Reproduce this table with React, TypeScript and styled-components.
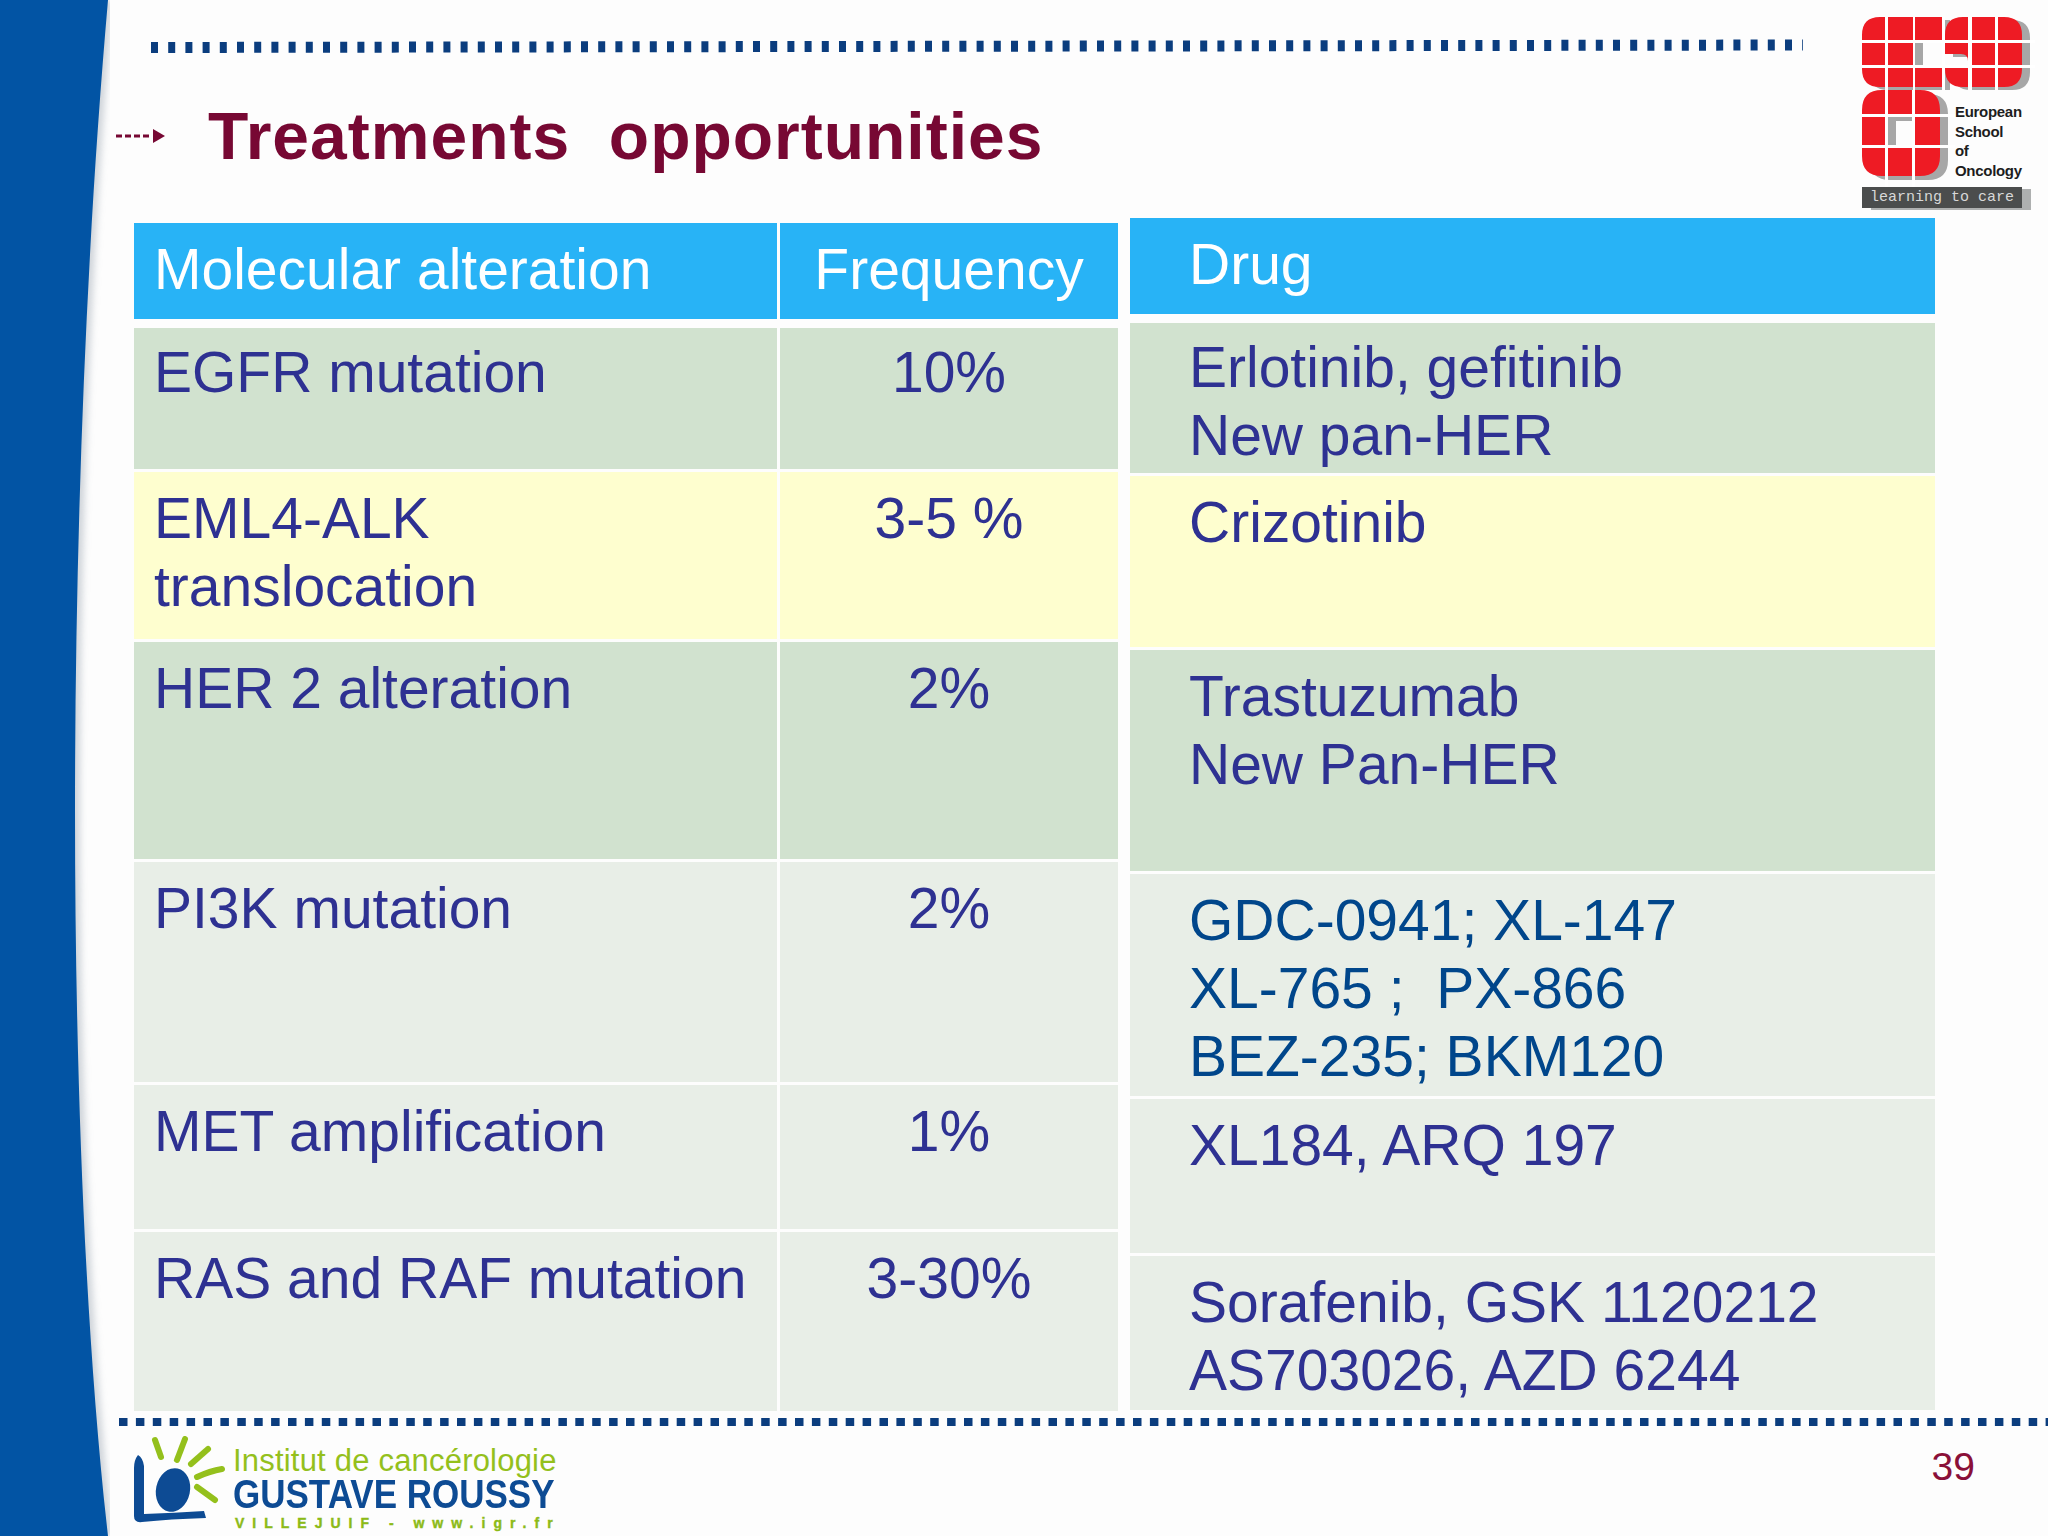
import React from 'react';
import styled, { createGlobalStyle } from 'styled-components';

// --- Palette ---
const BLUE_BAND = '#0254a4';
const NAVY_DOTS = '#0b3d7e';
const MAROON = '#770833';
const HEAD_BLUE = '#28b3f6';
const INK = '#2e3192';
const INK_ALT = '#00468b';
const ROW_GREEN = '#d1e2cf';
const ROW_YELLOW = '#fefecf';
const ROW_PALE = '#e8eee7';
const ESO_RED = '#ee1b24';
const ESO_SHADE = '#a7a7a7';
const GR_BLUE = '#0d4b94';
const GR_GREEN = '#94c01c';

const GlobalStyle = createGlobalStyle`
  html, body {
    margin: 0;
    padding: 0;
    background: #fdfdfd;
  }
  body {
    font-family: 'Liberation Sans', Arial, sans-serif;
  }
`;

// --- Slide frame ---
const Slide = styled.div`
  width: 2048px;
  height: 1536px;
  display: grid;
  grid-template-columns: 110px 1fr;
  background: #fdfdfd;
  overflow: hidden;
`;

const BandSvg = styled.svg`
  display: block;
  width: 110px;
  height: 1536px;
`;

const Main = styled.div`
  display: flex;
  flex-direction: column;
  min-width: 0;
`;

// --- Header ---
const Header = styled.header`
  height: 218px;
  display: flex;
  align-items: flex-start;
`;

const HeaderLeft = styled.div`
  flex: 1;
  padding-top: 39px;
`;

const TopRule = styled.svg`
  display: block;
  margin-left: 41px;
  width: 1652px;
  height: 16px;
`;

const TitleRow = styled.div`
  display: flex;
  align-items: center;
  height: 66px;
  margin-top: 48px;
  padding-left: 6px;
`;

const TitleArrow = styled.svg`
  width: 50px;
  height: 20px;
  margin-right: 42px;
  flex-shrink: 0;
`;

const Title = styled.h1`
  margin: 0;
  font-family: 'Liberation Sans', Arial, sans-serif;
  font-weight: 700;
  font-size: 66px;
  line-height: 66px;
  letter-spacing: 1px;
  color: ${MAROON};
  white-space: pre;
`;

// --- ESO logo ---
const EsoLogo = styled.div`
  width: 173px;
  margin: 17px 13px 0 0;
  display: grid;
  grid-template-columns: 93px 1fr;
  grid-template-rows: 73px 97px auto;
`;

const EsoTiles = styled.svg`
  display: block;
  grid-column: 1 / 3;
  width: 173px;
  height: 73px;
`;

const EsoO = styled.svg`
  display: block;
  width: 93px;
  height: 97px;
`;

const EsoName = styled.div`
  padding-top: 12px;
  font-family: 'Liberation Sans', Arial, sans-serif;
  font-weight: 700;
  font-size: 15px;
  line-height: 19.5px;
  color: #1d1d1d;
  letter-spacing: -0.3px;
`;

const EsoBar = styled.div`
  grid-column: 1 / 3;
  width: 160px;
  height: 21px;
  background: #4b4d4d;
  box-shadow: 9px 2px 0 #aeb0b0;
  color: #d8d8d8;
  font-family: 'Liberation Mono', monospace;
  font-size: 15px;
  line-height: 21px;
  text-align: center;
`;

// --- Tables ---
const Tables = styled.section`
  display: flex;
  align-items: flex-start;
  gap: 12px;
  padding-left: 24px;
`;

const Table = styled.div<{ $width: number; $offset: number }>`
  width: ${({ $width }) => $width}px;
  margin-top: ${({ $offset }) => $offset}px;
  display: flex;
  flex-direction: column;
  gap: 3px;
`;

const Row = styled.div<{ $cols: string; $height: number; $head?: boolean }>`
  display: grid;
  grid-template-columns: ${({ $cols }) => $cols};
  column-gap: 3px;
  height: ${({ $height }) => $height}px;
  margin-bottom: ${({ $head }) => ($head ? 6 : 0)}px;
`;

const Cell = styled.div<{ $bg: string; $color: string; $pad: number; $top?: number; $center?: boolean }>`
  background: ${({ $bg }) => $bg};
  color: ${({ $color }) => $color};
  padding: ${({ $top }) => $top ?? 12}px 0 0 ${({ $pad }) => $pad}px;
  text-align: ${({ $center }) => ($center ? 'center' : 'left')};
  font-family: 'Liberation Sans', Arial, sans-serif;
  font-size: 57px;
  line-height: 68px;
  white-space: pre;
  box-sizing: border-box;
`;

// --- Footer ---
const BottomRule = styled.svg`
  display: block;
  margin: 7px 0 0 9px;
  width: 1929px;
  height: 8px;
`;

const Footer = styled.footer`
  flex: 1;
  display: flex;
  justify-content: space-between;
  align-items: flex-start;
  padding-left: 20px;
`;

const GrLogo = styled.div`
  display: flex;
  align-items: flex-start;
`;

const GrIcon = styled.svg`
  width: 96px;
  height: 92px;
  margin: 10px 9px 0 0;
`;

const GrText = styled.div`
  display: flex;
  flex-direction: column;
  padding-top: 21px;
`;

const GrInstitut = styled.span`
  font-family: 'Liberation Sans', Arial, sans-serif;
  font-size: 31px;
  line-height: 28px;
  color: ${GR_GREEN};
  letter-spacing: 0.2px;
  margin-left: -2px;
`;

const GrName = styled.span`
  margin-top: 3px;
  margin-left: -2px;
  font-family: 'Liberation Sans', Arial, sans-serif;
  font-weight: 700;
  font-size: 40px;
  line-height: 33px;
  color: ${GR_BLUE};
  transform: scaleX(0.875);
  transform-origin: left center;
  white-space: nowrap;
`;

const GrPlace = styled.span`
  margin-top: 5px;
  font-family: 'Liberation Sans', Arial, sans-serif;
  font-weight: 700;
  font-size: 14px;
  line-height: 14px;
  letter-spacing: 8px;
  color: #8cba17;
  white-space: nowrap;
  -webkit-text-stroke: 0.4px #8cba17;
`;

const PageNumber = styled.span`
  margin: 21px 73px 0 0;
  font-family: 'Liberation Sans', Arial, sans-serif;
  font-size: 39px;
  line-height: 39px;
  color: #8a1038;
`;

// --- Data ---
type AltRow = { alteration: string; frequency: string; bg: string; height: number; top?: number };
type DrugRow = { drugs: string; bg: string; height: number; color?: string; top?: number };

const alterations: AltRow[] = [
  { alteration: 'EGFR mutation', frequency: '10%', bg: ROW_GREEN, height: 141, top: 10 },
  { alteration: 'EML4-ALK\ntranslocation', frequency: '3-5 %', bg: ROW_YELLOW, height: 167 },
  { alteration: 'HER 2 alteration', frequency: '2%', bg: ROW_GREEN, height: 217 },
  { alteration: 'PI3K mutation', frequency: '2%', bg: ROW_PALE, height: 220 },
  { alteration: 'MET amplification', frequency: '1%', bg: ROW_PALE, height: 144 },
  { alteration: 'RAS and RAF mutation', frequency: '3-30%', bg: ROW_PALE, height: 179 },
];

const drugs: DrugRow[] = [
  { drugs: 'Erlotinib, gefitinib\nNew pan-HER', bg: ROW_GREEN, height: 150, top: 10 },
  { drugs: 'Crizotinib', bg: ROW_YELLOW, height: 171 },
  { drugs: 'Trastuzumab\nNew Pan-HER', bg: ROW_GREEN, height: 221 },
  { drugs: 'GDC-0941; XL-147\nXL-765 ;  PX-866\nBEZ-235; BKM120', bg: ROW_PALE, height: 222, color: INK_ALT },
  { drugs: 'XL184, ARQ 197', bg: ROW_PALE, height: 154 },
  { drugs: 'Sorafenib, GSK 1120212\nAS703026, AZD 6244', bg: ROW_PALE, height: 154 },
];

const LEFT_COLS = '643px 338px';

// --- Drawings ---
const BAND_PATH = 'M0 0 H108 C64 500 64 1150 108 1536 H0 Z';

function Band() {
  return (
    <BandSvg viewBox="0 0 110 1536">
      <defs>
        <filter id="bandShade" x="-50%" y="-5%" width="200%" height="110%">
          <feGaussianBlur stdDeviation="3.5" />
        </filter>
      </defs>
      <path d={BAND_PATH} fill="#aab3bd" opacity="0.55" filter="url(#bandShade)" transform="translate(5 0)" />
      <path d={BAND_PATH} fill={BLUE_BAND} />
    </BandSvg>
  );
}

// E: notch on the middle right; S: notches top-right and bottom-left
const E_PATH = 'M18 0 H80 V23 H53 V48 H80 V70 H18 Q0 70 0 52 V18 Q0 0 18 0 Z';
const S_PATH =
  'M101 0 H142 Q160 0 160 18 V34 H143 Q136 34 136 27 V23 H83 V18 Q83 0 101 0 Z ' +
  'M83 26 H160 V52 Q160 70 142 70 H101 Q83 70 83 52 V48 H106 V44 Q106 37 99 37 H83 Z';

function EsoTop() {
  return (
    <EsoTiles viewBox="0 0 173 73">
      <g fill={ESO_SHADE} transform="translate(8 3)">
        <path d={E_PATH} />
        <path d={S_PATH} />
      </g>
      <g fill={ESO_RED}>
        <path d={E_PATH} />
        <path d={S_PATH} />
      </g>
      <g fill="#fff">
        <rect x="23" y="0" width="3" height="73" />
        <rect x="51" y="0" width="2" height="73" />
        <rect x="80" y="0" width="3" height="73" />
        <rect x="106" y="0" width="4" height="73" />
        <rect x="133" y="0" width="3" height="73" />
        <rect x="0" y="23" width="173" height="3" />
        <rect x="0" y="48" width="173" height="3" />
      </g>
    </EsoTiles>
  );
}

const O_PATH = 'M20 0 H58 Q78 0 78 20 V66 Q78 86 58 86 H20 Q0 86 0 66 V20 Q0 0 20 0 Z M26 27 H50 V58 H26 Z';

function EsoOTile() {
  return (
    <EsoO viewBox="0 0 93 97">
      <path d={O_PATH} fill={ESO_SHADE} fillRule="evenodd" transform="translate(8 4)" />
      <path d={O_PATH} fill={ESO_RED} fillRule="evenodd" />
      <g fill="#fff">
        <rect x="23" y="0" width="3" height="97" />
        <rect x="50" y="0" width="3" height="97" />
        <rect x="0" y="24" width="93" height="3" />
        <rect x="0" y="55" width="93" height="3" />
      </g>
    </EsoO>
  );
}

function GustaveIcon() {
  return (
    <GrIcon viewBox="0 0 96 92">
      <g stroke={GR_GREEN} strokeWidth="6" strokeLinecap="round" fill="none">
        <path d="M25 4 L31 21" />
        <path d="M55 3 L47 24" />
        <path d="M78 13 L61 28" />
        <path d="M67 41 Q80 35 92 33" />
        <path d="M67 51 L85 64" />
      </g>
      <ellipse cx="43" cy="54" rx="17" ry="22" fill={GR_BLUE} transform="rotate(12 43 54)" />
      <path
        d="M8 19 Q4 24 4 32 L4 80 Q4 87 12 86 Q40 83 76 82 L74 75 Q44 77 14 78 L14 30 Q13 22 8 19 Z"
        fill={GR_BLUE}
      />
    </GrIcon>
  );
}

export default function App() {
  return (
    <>
      <GlobalStyle />
      <Slide>
        <Band />
        <Main>
          <Header>
            <HeaderLeft>
              <TopRule viewBox="0 0 1652 16">
                <line x1="0" y1="8.5" x2="1652" y2="6" stroke={NAVY_DOTS} strokeWidth="11" strokeDasharray="7 10.2" />
              </TopRule>
              <TitleRow>
                <TitleArrow viewBox="0 0 50 20">
                  <line x1="0" y1="10" x2="36" y2="10" stroke={MAROON} strokeWidth="3" strokeDasharray="6 3" />
                  <path d="M37 3 L49 10 L37 17 Z" fill={MAROON} />
                </TitleArrow>
                <Title>{'Treatments  opportunities'}</Title>
              </TitleRow>
            </HeaderLeft>
            <EsoLogo>
              <EsoTop />
              <EsoOTile />
              <EsoName>
                European
                <br />
                School
                <br />
                of
                <br />
                Oncology
              </EsoName>
              <EsoBar>learning to care</EsoBar>
            </EsoLogo>
          </Header>

          <Tables>
            <Table $width={984} $offset={5}>
              <Row $cols={LEFT_COLS} $height={96} $head>
                <Cell $bg={HEAD_BLUE} $color="#fff" $pad={20}>Molecular alteration</Cell>
                <Cell $bg={HEAD_BLUE} $color="#fff" $pad={0} $center>Frequency</Cell>
              </Row>
              {alterations.map((r) => (
                <Row key={r.alteration} $cols={LEFT_COLS} $height={r.height}>
                  <Cell $bg={r.bg} $color={INK} $pad={20} $top={r.top}>{r.alteration}</Cell>
                  <Cell $bg={r.bg} $color={INK} $pad={0} $top={r.top} $center>{r.frequency}</Cell>
                </Row>
              ))}
            </Table>

            <Table $width={805} $offset={0}>
              <Row $cols="1fr" $height={96} $head>
                <Cell $bg={HEAD_BLUE} $color="#fff" $pad={59}>Drug</Cell>
              </Row>
              {drugs.map((r) => (
                <Row key={r.drugs} $cols="1fr" $height={r.height}>
                  <Cell $bg={r.bg} $color={r.color ?? INK} $pad={59} $top={r.top}>{r.drugs}</Cell>
                </Row>
              ))}
            </Table>
          </Tables>

          <BottomRule viewBox="0 0 1929 8">
            <line x1="0" y1="4" x2="1929" y2="4" stroke={NAVY_DOTS} strokeWidth="8" strokeDasharray="8.5 8.4" />
          </BottomRule>

          <Footer>
            <GrLogo>
              <GustaveIcon />
              <GrText>
                <GrInstitut>Institut de cancérologie</GrInstitut>
                <GrName>GUSTAVE ROUSSY</GrName>
                <GrPlace>VILLEJUIF - www.igr.fr</GrPlace>
              </GrText>
            </GrLogo>
            <PageNumber>39</PageNumber>
          </Footer>
        </Main>
      </Slide>
    </>
  );
}
